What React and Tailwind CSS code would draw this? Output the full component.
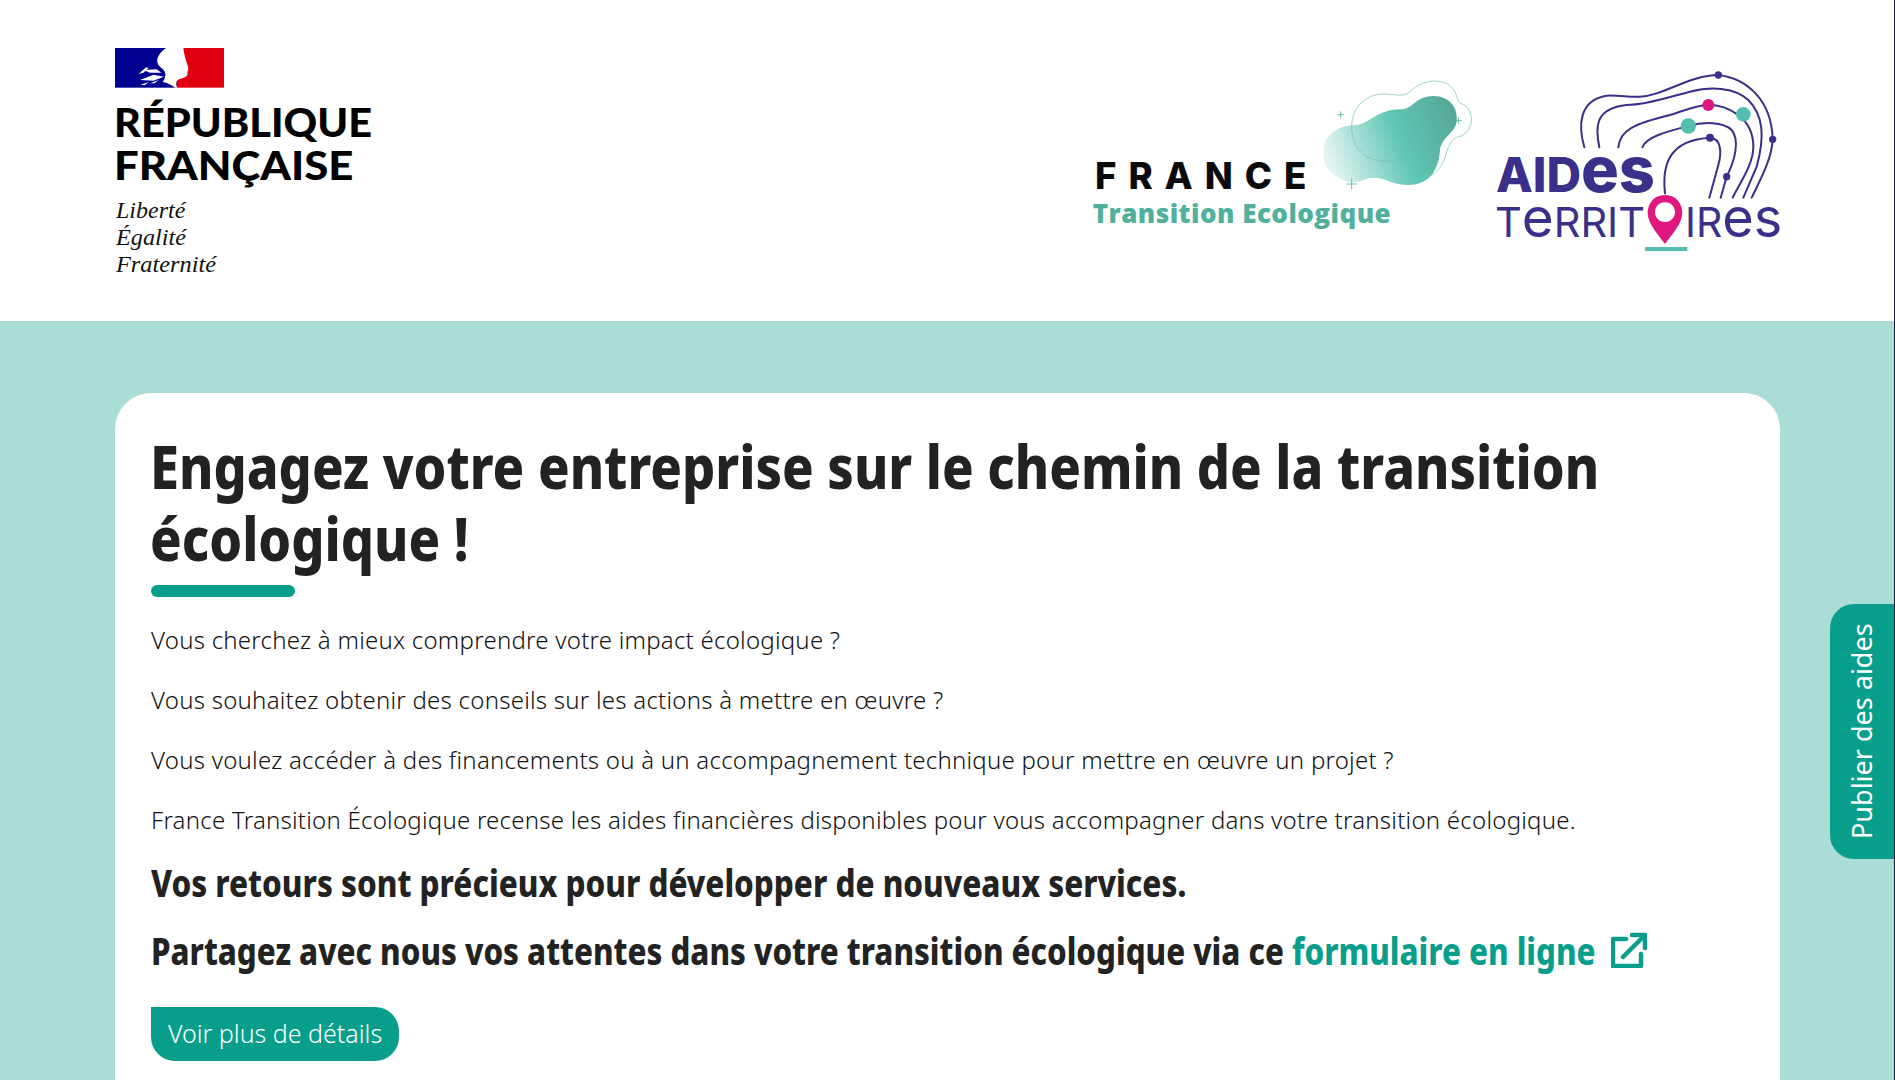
import React from 'react';

const heading = "font-['Noto_Sans',sans-serif] font-extrabold";
const body = 'text-[24px] font-light leading-[36px] tracking-[0.24px] text-[#111]';

function RepubliqueLogo() {
  return (
    <svg width="260" height="232" viewBox="75 54 780 696" className="shrink-0">
      <rect x="75" y="54" width="185" height="119" fill="#000091" />
      <rect x="260" y="54" width="142" height="119" fill="#e1000f" />
      {/* Marianne */}
      <path
        d="M228 54 C212 66 200 80 202 96 C204 112 222 114 226 130 C226 144 222 150 218 156 C232 158 246 166 256 173 L262 173 C254 160 258 150 272 146 C288 142 296 136 292 126 C296 120 296 112 292 104 C288 92 282 72 280 54 Z"
        fill="#fff"
      />
      <path
        d="M146 132 L168 112 L176 114 L160 128 Z M160 120 L200 118 L214 128 L180 128 Z M150 150 L190 134 L222 140 L190 152 Z M152 164 L176 156 L164 166 Z M180 160 L206 150 L194 160 Z"
        fill="#fff"
      />
      <text x="72" y="320" fontFamily="Lato, sans-serif" fontWeight="900" fontSize="118" textLength="774" lengthAdjust="spacingAndGlyphs" fill="#000">RÉPUBLIQUE</text>
      <text x="72" y="450" fontFamily="Lato, sans-serif" fontWeight="900" fontSize="118" textLength="718" lengthAdjust="spacingAndGlyphs" fill="#000">FRANÇAISE</text>
      <text x="78" y="563" fontFamily="'Liberation Serif', serif" fontStyle="italic" fontSize="70" textLength="208" lengthAdjust="spacingAndGlyphs" fill="#111">Liberté</text>
      <text x="78" y="645" fontFamily="'Liberation Serif', serif" fontStyle="italic" fontSize="70" textLength="210" lengthAdjust="spacingAndGlyphs" fill="#111">Égalité</text>
      <text x="78" y="725" fontFamily="'Liberation Serif', serif" fontStyle="italic" fontSize="70" textLength="300" lengthAdjust="spacingAndGlyphs" fill="#111">Fraternité</text>
    </svg>
  );
}

function FranceLogo() {
  return (
    <svg width="385" height="185" viewBox="60 0 1155 555" className="shrink-0">
      <defs>
        <linearGradient id="blob" x1="0" y1="0.55" x2="1" y2="0.3">
          <stop offset="0" stopColor="#e4f4f1" />
          <stop offset="0.55" stopColor="#5fc6b6" />
          <stop offset="1" stopColor="#57a996" />
        </linearGradient>
      </defs>
      <path
        d="M760 305 C760 250 810 225 860 225 C900 220 920 180 990 178 C1030 180 1030 140 1090 138 C1140 138 1165 175 1160 215 C1155 250 1115 260 1110 300 C1105 370 1070 405 1015 405 C960 405 940 375 895 385 C860 400 835 402 810 385 C780 370 760 350 760 305 Z"
        fill="url(#blob)"
      />
      <path
        d="M845 230 C845 170 890 130 945 132 C990 135 1000 140 1020 125 C1050 95 1090 85 1130 100 C1160 115 1160 150 1170 160 C1215 170 1220 250 1160 262 C1120 280 1140 340 1085 375 C1050 385 1030 350 1000 325 C960 340 930 335 890 320 C860 300 845 270 845 230 Z"
        fill="none"
        stroke="#6fbfb0"
        strokeWidth="2"
      />
      <path d="M812 184 V204 M802 194 H822 M1165 202 V222 M1155 212 H1175 M845 386 V418 M829 402 H861" stroke="#4fb09b" strokeWidth="2.5" />
      <text x="75" y="418" fontFamily="Inter, sans-serif" fontWeight="800" fontSize="110" textLength="634" fill="#0a0a0a">FRANCE</text>
      <text x="68" y="518" fontFamily="'Open Sans', sans-serif" fontWeight="800" fontSize="78" textLength="894" fill="#4fb09b">Transition Ecologique</text>
    </svg>
  );
}

function AidesLogo() {
  const navy = '#3a3089';
  return (
    <svg width="295" height="205" viewBox="60 0 885 615" className="shrink-0">
      <g fill="none" stroke={navy} strokeWidth="6" strokeLinecap="round">
        <path d="M343 292 C325 230 325 150 410 137 C470 135 500 150 560 130 C620 110 680 75 745 75 C830 85 905 150 908 268 C905 330 870 390 845 443" />
        <path d="M388 292 C375 230 375 175 470 165 C530 165 600 140 660 125 C720 110 790 110 835 150 C880 195 885 260 860 350 L820 443" />
        <path d="M445 292 C450 240 490 222 600 195 C650 180 680 165 715 165 C770 165 850 200 850 290 C850 340 815 390 788 443" />
        <path d="M517 292 C530 260 590 245 655 228 C700 215 760 215 785 240 C810 270 795 330 770 380 L752 443" />
        <path d="M585 430 C575 340 600 270 720 263 C755 265 755 310 745 345 L718 443" />
      </g>
      <circle cx="745" cy="75" r="11" fill={navy} />
      <circle cx="908" cy="268" r="11" fill={navy} />
      <circle cx="720" cy="263" r="12" fill={navy} />
      <circle cx="770" cy="380" r="11" fill={navy} />
      <circle cx="715" cy="165" r="18" fill="#e0177e" />
      <circle cx="820" cy="193" r="22" fill="#54bfae" />
      <circle cx="655" cy="228" r="23" fill="#54bfae" />
      <text x="78" y="425" fontFamily="Inter, sans-serif" fontWeight="800" fontSize="144" textLength="477" lengthAdjust="spacingAndGlyphs" fill={navy}>
        AID<tspan fontSize="190">es</tspan>
      </text>
      <text x="75" y="560" fontFamily="Inter, sans-serif" fontWeight="400" fontSize="124" textLength="450" lengthAdjust="spacingAndGlyphs" fill={navy}>
        T<tspan fontSize="164">e</tspan>RRIT
      </text>
      <text x="645" y="560" fontFamily="Inter, sans-serif" fontWeight="400" fontSize="124" textLength="292" lengthAdjust="spacingAndGlyphs" fill={navy}>
        IR<tspan fontSize="164">es</tspan>
      </text>
      <path
        fillRule="evenodd"
        d="M585 435 C620 435 637 462 637 490 C637 520 605 555 585 582 C565 555 533 520 533 490 C533 462 550 435 585 435 Z M585 457 C566 457 555 471 555 487 C555 503 568 516 585 516 C602 516 615 503 615 487 C615 471 604 457 585 457 Z"
        fill="#e0177e"
      />
      <rect x="525" y="591" width="127" height="12" fill="#54bfae" />
    </svg>
  );
}

function ExternalIcon() {
  return (
    <svg width="36" height="36" viewBox="0 0 36 36" fill="none" stroke="#079f8b" strokeWidth="4.5" strokeLinecap="round" strokeLinejoin="round" className="ml-[16px] shrink-0">
      <path d="M15 7 H2 V34 H30 V22" />
      <path d="M12 25 L33 4" />
      <path d="M21 3 H34 V16" />
    </svg>
  );
}

export default function App() {
  return (
    <div className="relative h-[1080px] w-full overflow-hidden bg-white font-['Noto_Sans',sans-serif] text-[#222]">
      <header className="flex h-[321px] items-start justify-between pl-[115px] pr-[110px] pt-[48px]">
        <RepubliqueLogo />
        <div className="mt-[2px] flex gap-[15px]">
          <FranceLogo />
          <AidesLogo />
        </div>
      </header>

      <main className="h-[759px] bg-[#a9ddd5] px-[115px] pt-[72px]">
        <div className="h-[800px] rounded-[36px] bg-white px-[36px] pt-[37px]">
          <h1 className={`${heading} -ml-[1px] w-[1850px] origin-left scale-x-[0.871] text-[60px] leading-[72px]`}>
            Engagez votre entreprise sur le chemin de la transition écologique !
          </h1>
          <div className="mb-[25px] mt-[11px] h-[12px] w-[144px] rounded-full bg-[#079f8b]" />
          <p className={`mb-[24px] ${body}`}>Vous cherchez à mieux comprendre votre impact écologique ?</p>
          <p className={`mb-[24px] ${body}`}>Vous souhaitez obtenir des conseils sur les actions à mettre en œuvre ?</p>
          <p className={`mb-[24px] ${body}`}>Vous voulez accéder à des financements ou à un accompagnement technique pour mettre en œuvre un projet ?</p>
          <p className={`mb-[20px] ${body}`}>France Transition Écologique recense les aides financières disponibles pour vous accompagner dans votre transition écologique.</p>
          <p className={`${heading} mb-[20px] origin-left scale-x-[0.826] whitespace-nowrap text-[38px] leading-[48px]`}>Vos retours sont précieux pour développer de nouveaux services.</p>
          <div className="mb-[33px] flex h-[48px] items-center">
            <div className="w-[1444px] shrink-0">
              <p className={`${heading} origin-left scale-x-[0.822] whitespace-nowrap text-[38px] leading-[48px]`}>
                Partagez avec nous vos attentes dans votre transition écologique via ce <a href="#" className="text-[#079f8b]">formulaire en ligne</a>
              </p>
            </div>
            <ExternalIcon />
          </div>
          <a href="#" className="inline-flex h-[54px] w-[248px] items-center justify-center rounded-[24px] rounded-tl-none bg-[#079f8b] text-[25px] font-light text-white">
            Voir plus de détails
          </a>
        </div>
      </main>

      {/* side tab */}
      <a href="#" className="absolute right-[1px] top-[604px] flex h-[255px] w-[64px] rotate-180 items-center justify-center rounded-r-[24px] bg-[#079f8b] text-[27px] text-white [writing-mode:vertical-rl]">
        Publier des aides
      </a>
      <div className="absolute right-0 top-0 h-full w-px bg-[#1b1b3a]" />
    </div>
  );
}
